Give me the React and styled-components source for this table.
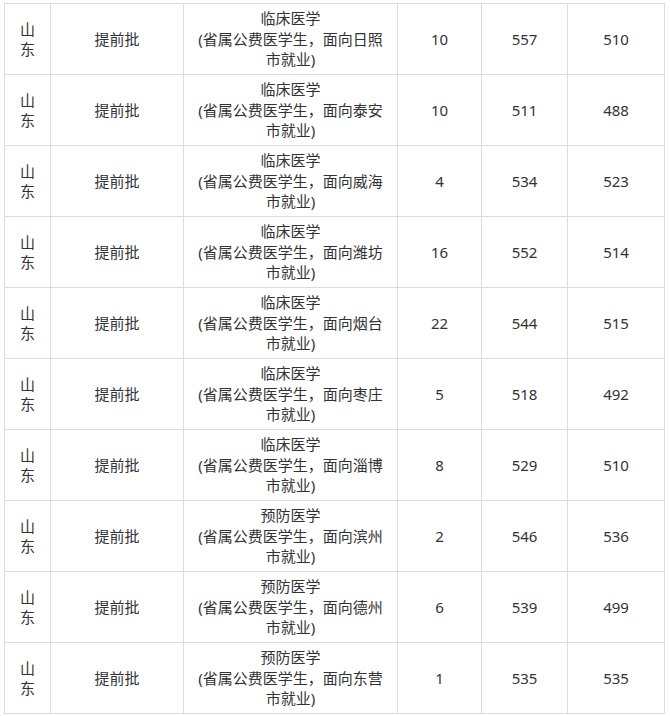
import React from 'react';
import styled, { createGlobalStyle } from 'styled-components';

const GlobalStyle = createGlobalStyle`
  html, body {
    margin: 0;
    padding: 0;
    background: #fff;
  }
  body {
    font-family: "Noto Sans", "Noto Sans CJK SC", sans-serif;
    color: #333;
  }
`;

const Page = styled.div`
  padding: 3px 0 0 4px;
`;

const Table = styled.table`
  border-collapse: collapse;
  table-layout: fixed;
  width: 661px;
  font-size: 15px;
  line-height: 20.5px;
`;

const Col = styled.col`
  width: ${(props) => props.w}px;
`;

const Cell = styled.td`
  border: 1px solid #dcdcdc;
  height: 71px;
  padding: 0 4px;
  box-sizing: border-box;
  text-align: center;
  vertical-align: middle;
`;

const Line = styled.div`
  white-space: nowrap;
`;

const rows = [
  ['临床医学', '日照', 10, 557, 510],
  ['临床医学', '泰安', 10, 511, 488],
  ['临床医学', '威海', 4, 534, 523],
  ['临床医学', '潍坊', 16, 552, 514],
  ['临床医学', '烟台', 22, 544, 515],
  ['临床医学', '枣庄', 5, 518, 492],
  ['临床医学', '淄博', 8, 529, 510],
  ['预防医学', '滨州', 2, 546, 536],
  ['预防医学', '德州', 6, 539, 499],
  ['预防医学', '东营', 1, 535, 535],
];

const widths = [46, 133, 214, 84, 86, 97];

export default function App() {
  return (
    <Page>
      <GlobalStyle />
      <Table>
        <colgroup>
          {widths.map((w, i) => <Col key={i} w={w} />)}
        </colgroup>
        <tbody>
          {rows.map(([major, city, plan, high, low], i) => (
            <tr key={i}>
              <Cell>
                <Line>山</Line>
                <Line>东</Line>
              </Cell>
              <Cell>提前批</Cell>
              <Cell>
                <Line>{major}</Line>
                <Line>(省属公费医学生，面向{city}</Line>
                <Line>市就业)</Line>
              </Cell>
              <Cell>{plan}</Cell>
              <Cell>{high}</Cell>
              <Cell>{low}</Cell>
            </tr>
          ))}
        </tbody>
      </Table>
    </Page>
  );
}
